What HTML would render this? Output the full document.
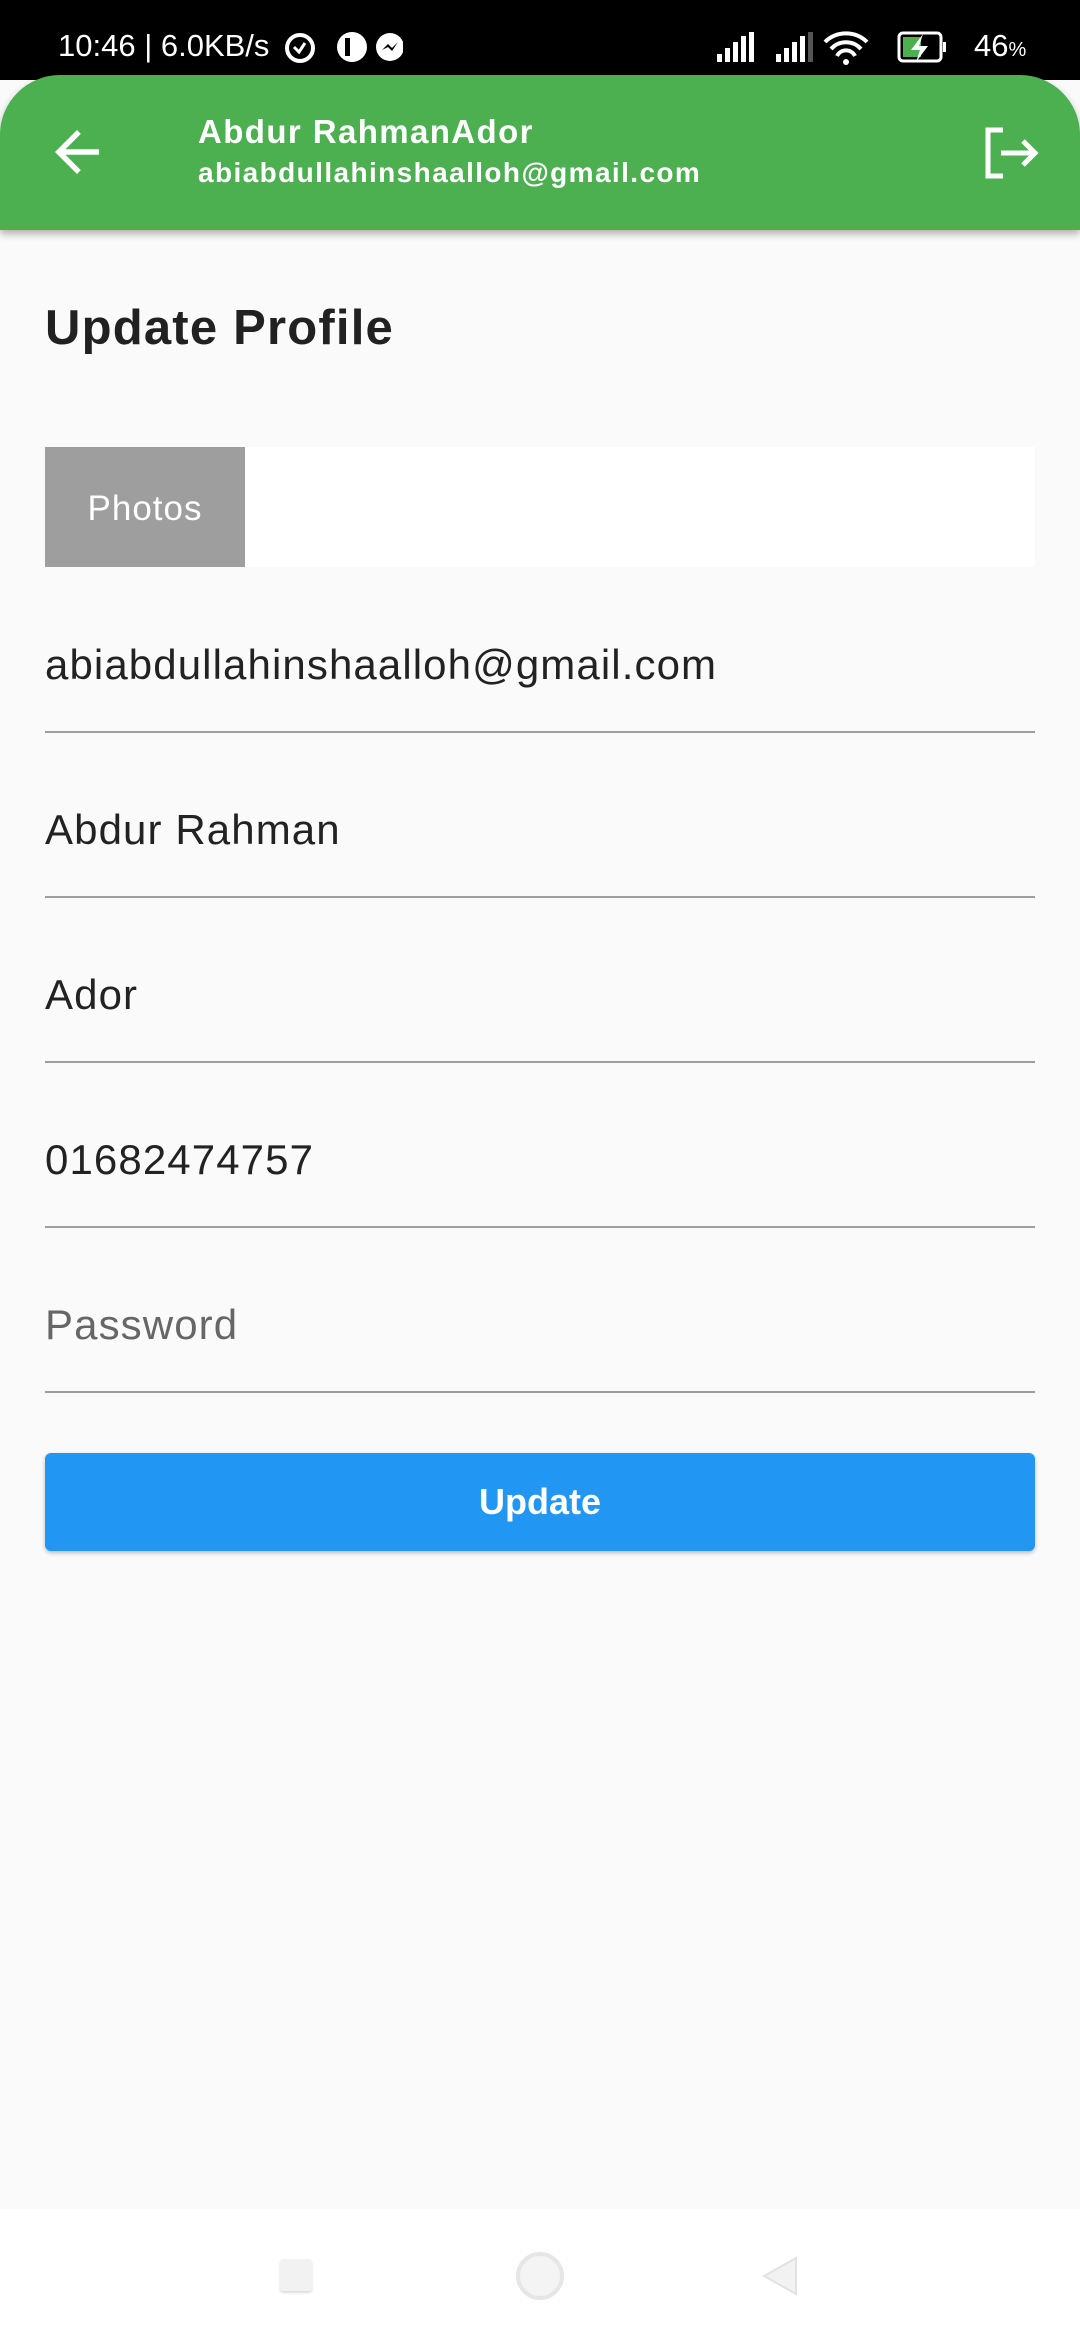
<!DOCTYPE html>
<html><head><meta charset="utf-8"><style>
*{margin:0;padding:0;box-sizing:border-box}
body{width:1080px;height:2340px;background:#fafafa;font-family:"Liberation Sans",Roboto,sans-serif;position:relative;overflow:hidden}
.abs{position:absolute}
.sb{top:0;left:0;width:1080px;height:80px;background:#000;color:#fff;font-size:31px}
.bar{top:75px;left:0;width:1080px;height:155px;background:#4caf50;border-radius:60px 60px 0 0;box-shadow:0 4px 8px rgba(0,0,0,.3)}
.field{left:45px;width:990px;border-bottom:2px solid #9e9e9e;font-size:42px;color:#222;height:100px;letter-spacing:1.1px}
.field span{position:absolute;left:0;bottom:42px}
</style></head><body>
<div class="abs sb">
 <div class="abs" style="left:58px;top:28px;letter-spacing:0">10:46 | 6.0KB/s</div>
 <svg class="abs" style="left:283px;top:28px" width="120" height="38" viewBox="0 0 120 38"><circle cx="17" cy="20" r="13" fill="none" stroke="#fff" stroke-width="4"/><path d="M11 19l5 5 6-9" stroke="#fff" stroke-width="3" fill="none"/><circle cx="69" cy="19" r="15" fill="#fff"/><rect x="62" y="10" width="5" height="18" fill="#000"/><circle cx="107" cy="19" r="14" fill="#fff"/><path d="M99 22l6-6 4 4 6-6-6 9-4-4z" fill="#000"/></svg>
 <svg class="abs" style="left:715px;top:28px" width="300" height="40" viewBox="0 0 300 40"><g fill="#fff"><rect x="2" y="26" width="5" height="8"/><rect x="10" y="20" width="5" height="14"/><rect x="18" y="14" width="5" height="20"/><rect x="26" y="8" width="5" height="26"/><rect x="34" y="4" width="5" height="30"/><rect x="61" y="26" width="5" height="8"/><rect x="69" y="20" width="5" height="14"/><rect x="77" y="14" width="5" height="20"/><rect x="85" y="8" width="5" height="26"/></g><rect x="93" y="4" width="5" height="30" fill="#555"/><path d="M110 14a30 30 0 0 1 42 0M116 21a20 20 0 0 1 30 0M122 28a10 10 0 0 1 18 0" stroke="#fff" stroke-width="4" fill="none"/><circle cx="131" cy="34" r="3" fill="#fff"/><rect x="184" y="5" width="42" height="28" rx="4" fill="none" stroke="#fff" stroke-width="3"/><rect x="188" y="9" width="18" height="20" fill="#4caf50"/><path d="M208 6l-12 16h9l-4 12 12-16h-9z" fill="#fff"/><rect x="228" y="14" width="3" height="10" fill="#fff"/></svg>
 <div class="abs" style="left:974px;top:28px">46<span style="font-size:20px">%</span></div>
</div>
<div class="abs bar">
 <svg class="abs" style="left:44px;top:44px" width="66" height="66" viewBox="0 0 24 24"><path d="M20 11H7.8l5.6-5.6L12 4l-8 8 8 8 1.4-1.4L7.8 13H20z" fill="#fff"/></svg>
 <div class="abs" style="left:198px;top:38px;color:#fff;font-size:33px;font-weight:bold;letter-spacing:1.4px">Abdur RahmanAdor</div>
 <div class="abs" style="left:198px;top:82px;color:#fff;font-size:28px;font-weight:bold;letter-spacing:1.4px">abiabdullahinshaalloh@gmail.com</div>
 <svg class="abs" style="left:985px;top:52px" width="58" height="52" viewBox="0 0 58 52"><path d="M18 3H3v46h15" stroke="#fff" stroke-width="5" fill="none"/><path d="M16 26h34M38 14l12 12-12 12" stroke="#fff" stroke-width="5" fill="none"/></svg>
</div>
<div class="abs" style="left:45px;top:300px;font-size:49px;font-weight:bold;color:#212121;letter-spacing:1.2px">Update Profile</div>
<div class="abs" style="left:45px;top:447px;width:990px;height:120px;background:#fff"></div>
<div class="abs" style="left:45px;top:447px;width:200px;height:120px;background:#9e9e9e;color:#fff;font-size:35px;line-height:124px;text-align:center;letter-spacing:1px">Photos</div>
<div class="abs field" style="top:633px"><span>abiabdullahinshaalloh@gmail.com</span></div>
<div class="abs field" style="top:798px"><span>Abdur Rahman</span></div>
<div class="abs field" style="top:963px"><span>Ador</span></div>
<div class="abs field" style="top:1128px"><span>01682474757</span></div>
<div class="abs field" style="top:1293px;color:#666"><span>Password</span></div>
<div class="abs" style="left:45px;top:1453px;width:990px;height:98px;background:#2196f3;border-radius:6px;box-shadow:0 2px 4px rgba(0,0,0,.25);color:#fff;font-size:36px;font-weight:bold;text-align:center;line-height:98px">Update</div>
<div class="abs" style="left:0;top:2209px;width:1080px;height:131px;background:#fff"></div>
<div class="abs" style="left:280px;top:2259px;width:32px;height:32px;background:#f2f2f2;border-radius:3px;box-shadow:0 2px 2px #ddd"></div>
<div class="abs" style="left:516px;top:2252px;width:48px;height:48px;border-radius:50%;border:4px solid #e6e6e6;background:#f4f4f4"></div>
<svg class="abs" style="left:762px;top:2256px" width="36" height="40" viewBox="0 0 36 40"><path d="M34 2v36L2 20z" fill="#f2f2f2" stroke="#e2e2e2" stroke-width="2"/></svg>
</body></html>
